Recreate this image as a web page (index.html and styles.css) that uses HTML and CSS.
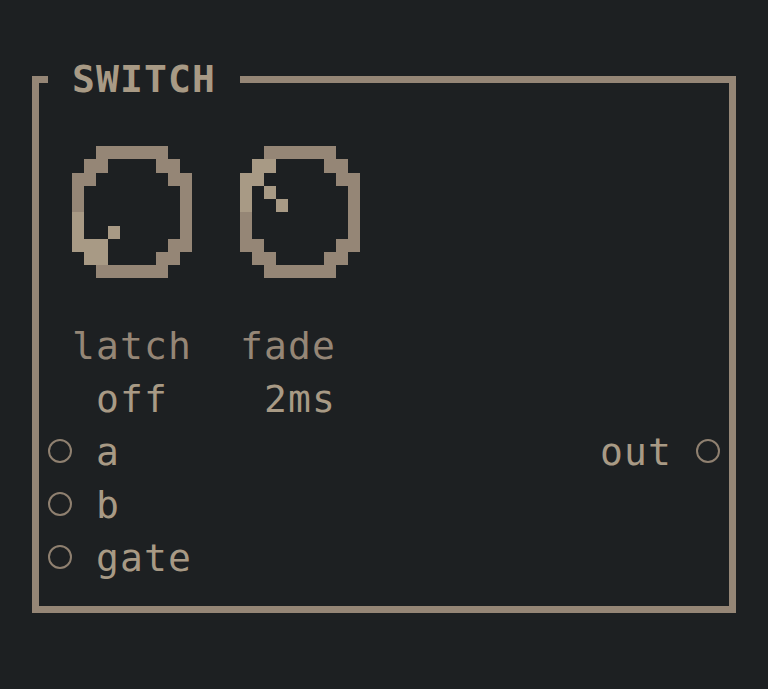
FILE: index.html
```html
<!DOCTYPE html>
<html>
<head>
<meta charset="utf-8">
<link rel="stylesheet" href="styles.css">
</head>
<body>
<div class="screen">
  <div class="frame"></div>
  <div class="title">SWITCH</div>

  <svg class="knob knob-latch" viewBox="0 0 10 10" preserveAspectRatio="none">
    <g class="dk">
      <rect x="2" y="0" width="6" height="1"/>
      <rect x="1" y="1" width="2" height="1"/><rect x="7" y="1" width="2" height="1"/>
      <rect x="0" y="2" width="2" height="1"/><rect x="8" y="2" width="2" height="1"/>
      <rect x="0" y="3" width="1" height="2"/><rect x="9" y="3" width="1" height="4"/>
      <rect x="8" y="7" width="2" height="1"/>
      <rect x="7" y="8" width="2" height="1"/>
      <rect x="2" y="9" width="6" height="1"/>
    </g>
    <g class="lt">
      <rect x="0" y="5" width="1" height="2"/>
      <rect x="3" y="6" width="1" height="1"/>
      <rect x="0" y="7" width="3" height="1"/>
      <rect x="1" y="8" width="2" height="1"/>
    </g>
  </svg>

  <svg class="knob knob-fade" viewBox="0 0 10 10" preserveAspectRatio="none">
    <g class="dk">
      <rect x="2" y="0" width="6" height="1"/>
      <rect x="7" y="1" width="2" height="1"/>
      <rect x="8" y="2" width="2" height="1"/>
      <rect x="9" y="3" width="1" height="4"/>
      <rect x="0" y="5" width="1" height="2"/>
      <rect x="0" y="7" width="2" height="1"/><rect x="8" y="7" width="2" height="1"/>
      <rect x="1" y="8" width="2" height="1"/><rect x="7" y="8" width="2" height="1"/>
      <rect x="2" y="9" width="6" height="1"/>
    </g>
    <g class="lt">
      <rect x="1" y="1" width="2" height="1"/>
      <rect x="0" y="2" width="2" height="1"/>
      <rect x="0" y="3" width="1" height="2"/>
      <rect x="2" y="3" width="1" height="1"/>
      <rect x="3" y="4" width="1" height="1"/>
    </g>
  </svg>

  <span class="label lbl-latch">latch</span>
  <span class="label lbl-fade">fade</span>
  <span class="value val-latch">off</span>
  <span class="value val-fade">2ms</span>

  <span class="port port-a"></span>
  <span class="pname pname-a">a</span>
  <span class="port port-b"></span>
  <span class="pname pname-b">b</span>
  <span class="port port-gate"></span>
  <span class="pname pname-gate">gate</span>

  <span class="pname pname-out">out</span>
  <span class="port port-out"></span>
</div>
</body>
</html>
```

FILE: styles.css
```css
body {
  margin: 0;
  background: #1d2022;
}

.screen {
  display: grid;
  grid-template-columns: repeat(32, 24px);
  grid-template-rows: repeat(13, 53px);
  width: 768px;
  height: 689px;
  font-family: "DejaVu Sans Mono", monospace;
  font-size: 38px;
  line-height: 53px;
  letter-spacing: 1.1px;
  color: #a89a85;
  white-space: nowrap;
}

.frame {
  grid-column: 2 / 32;
  grid-row: 2 / 13;
  margin: 23px 8px 23px 8px;
  border: 7px solid #958676;
}

.title {
  grid-column: 3 / 11;
  grid-row: 2;
  z-index: 1;
  background: #1d2022;
  padding-left: 24px;
  font-weight: bold;
  color: #a89a85;
}

.knob {
  grid-row: 3 / span 3;
  width: 120px;
  height: 132.5px;
  margin-top: 39.75px;
  shape-rendering: crispEdges;
}
.knob-latch { grid-column: 4 / span 5; }
.knob-fade { grid-column: 11 / span 5; }
.knob .dk { fill: #958676; }
.knob .lt { fill: #a89a85; }

.label, .value, .pname { padding-top: 2px; }

.label { color: #958676; }
.lbl-latch { grid-column: 4 / span 5; grid-row: 7; }
.lbl-fade { grid-column: 11 / span 4; grid-row: 7; }
.val-latch { grid-column: 5 / span 3; grid-row: 8; }
.val-fade { grid-column: 12 / span 3; grid-row: 8; }

.port {
  display: flex;
  align-items: center;
  justify-content: center;
}
.port::before {
  content: "";
  width: 20px;
  height: 20px;
  border: 2px solid #8f8070;
  border-radius: 50%;
}
.port-a { grid-column: 3; grid-row: 9; }
.port-b { grid-column: 3; grid-row: 10; }
.port-gate { grid-column: 3; grid-row: 11; }
.port-out { grid-column: 30; grid-row: 9; }

.pname-a { grid-column: 5 / span 4; grid-row: 9; }
.pname-b { grid-column: 5 / span 4; grid-row: 10; }
.pname-gate { grid-column: 5 / span 4; grid-row: 11; }
.pname-out { grid-column: 26 / span 3; grid-row: 9; }
```
